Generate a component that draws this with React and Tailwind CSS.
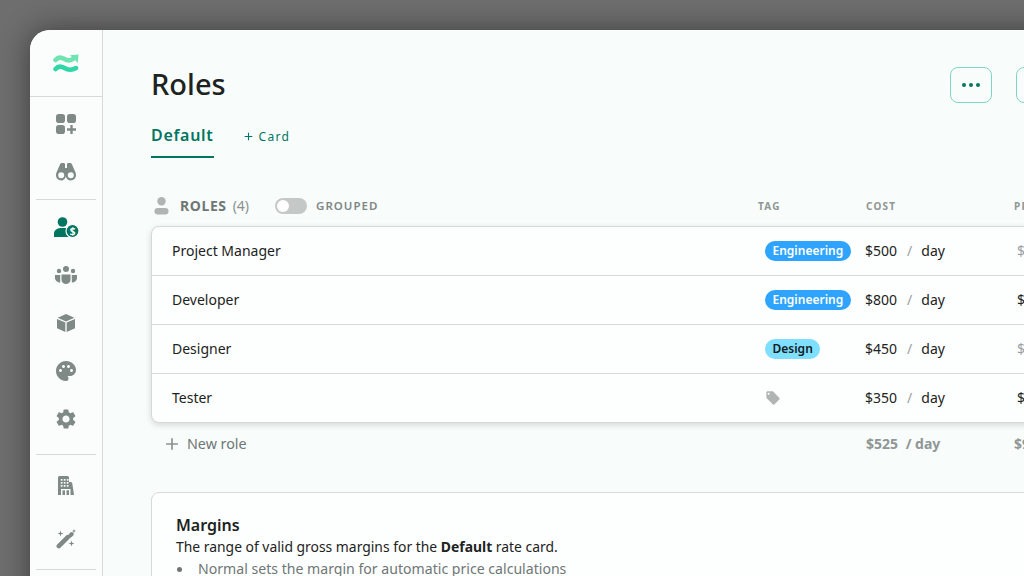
import React from 'react';
import { MdPalette, MdSettings, MdLocalOffer, MdAdd } from 'react-icons/md';

function Logo() {
    return (
        <svg width="26" height="20" viewBox="0 0 26 20" fill="none" className="mt-[1px]">
            <path d="M2.500 6C5 3 8 3 11 4.800S17 7.500 20.500 4.500" stroke="#6fe3b0" strokeWidth="4.500" strokeLinecap="round" />
            <path d="M17 1.200L25.500 .5l-.6 8.500z" fill="#6fe3b0" />
            <path d="M2.500 15C5 12 8 12 11 13.800S18 17 23 14" stroke="#2fd6a8" strokeWidth="4.500" strokeLinecap="round" />
        </svg>
    );
}

function Grid() {
    return (
        <svg width="20" height="20" viewBox="0 0 20 20" fill="#7f8a87">
            <rect x="0" y="0" width="9" height="9" rx="2.800" />
            <rect x="11" y="0" width="9" height="9" rx="2.800" />
            <rect x="0" y="11" width="9" height="9" rx="2.800" />
            <path d="M14.300 11h2.400v3.300H20v2.400h-3.300V20h-2.400v-3.300H11v-2.400h3.300z" />
        </svg>
    );
}

function Binoculars() {
    return (
        <svg width="20" height="18" viewBox="0 0 20 18" fill="#7f8a87">
            <path fillRule="evenodd" d="M4 1.500C4.300.5 5 0 6 0h1.500C8.500 0 9 .6 9 1.500V5h2V1.500C11 .6 11.500 0 12.500 0H14c1 0 1.700.5 2 1.500l3.300 7.500c.5 1 .7 2 .7 3.300 0 3-2.400 5.200-5.200 5.200-2.600 0-4.800-2-5-4.600C9.700 15.500 7.400 17.500 5.200 17.500 2.400 17.500 0 15.300 0 12.300 0 11 .2 10 .7 9zM5.200 9.300a3 3 0 1 0 0 6 3 3 0 0 0 0-6zm9.600 0a3 3 0 1 0 0 6 3 3 0 0 0 0-6z" />
        </svg>
    );
}

function RolesIcon() {
    return (
        <svg width="25" height="20" viewBox="0 0 25 20">
            <circle cx="8.500" cy="5" r="4.800" fill="#00755f" />
            <path d="M0 20v-3.500C0 13 3 11 8.500 11s8.500 2 8.500 5.500V20z" fill="#00755f" />
            <circle cx="18.500" cy="14" r="6.500" fill="#00755f" stroke="#fbfdfc" strokeWidth="1.200" />
            <text x="18.500" y="17.500" textAnchor="middle" fontSize="10" fontWeight="700" fill="#fff" fontFamily="Noto Sans, sans-serif">$</text>
        </svg>
    );
}

function Team() {
    return (
        <svg width="22" height="18" viewBox="0 0 22 18" fill="#7f8a87">
            <circle cx="11" cy="3" r="3" />
            <circle cx="4" cy="5" r="2.200" />
            <circle cx="18" cy="5" r="2.200" />
            <path d="M6.500 8.500h9V14a4.500 4 0 0 1-9 0z" />
            <path d="M0 9h5.200v7.500C2.500 16.500 0 14.500 0 12z" />
            <path d="M22 9h-5.200v7.500c2.700 0 5.200-2 5.200-4.500z" />
        </svg>
    );
}

function Cube() {
    return (
        <svg width="18" height="18" viewBox="0 0 18 18" fill="#7f8a87">
            <path d="M9 0l8.300 3.700L9 7.400.7 3.700z" />
            <path d="M0 5l8.300 3.600V18L0 14.200z" />
            <path d="M18 5L9.700 8.600V18L18 14.200z" />
        </svg>
    );
}

function Building() {
    return (
        <svg width="16" height="19" viewBox="0 0 16 19">
            <path d="M0 1.500Q0 0 1.500 0h8Q11 0 11 1.500V6h2q1 0 1.300 1.500L16 19H0z" fill="#7f8a87" />
            {[3, 6, 9].map((y) => [3, 6, 9].map((x) => (
                <rect key={`${x}-${y}`} x={x - 0.2} y={y} width="1.700" height="1.700" fill="#fbfdfc" />
            )))}
            <rect x="3" y="14" width="1.500" height="5" fill="#fbfdfc" />
            <rect x="7" y="14" width="1.500" height="5" fill="#fbfdfc" />
            <rect x="11" y="14" width="1.500" height="5" fill="#fbfdfc" />
            <rect x="3" y="13" width="9.500" height="1.300" fill="#fbfdfc" />
        </svg>
    );
}

function Wand() {
    return (
        <svg width="20" height="20" viewBox="0 0 20 20" fill="#7f8a87">
            <path d="M2.800 17.200L11.800 8.200" stroke="#7f8a87" strokeWidth="4.500" strokeLinecap="round" fill="none" />
            <path d="M14.200 6.600L15.800 5" stroke="#7f8a87" strokeWidth="4" strokeLinecap="round" fill="none" />
            <path d="M4.500 1.500l.7 2.300 2.300.7-2.300.7-.7 2.300-.7-2.300-2.300-.7 2.300-.7z" />
            <path d="M18 0l.6 1.400 1.400.6-1.400.6-.6 1.400-.6-1.400-1.400-.6 1.400-.6z" />
            <path d="M15.500 11.500l.7 2.300 2.300.7-2.300.7-.7 2.300-.7-2.300-2.300-.7 2.300-.7z" />
        </svg>
    );
}

function Person() {
    return (
        <svg width="15" height="18" viewBox="0 0 15 18" fill="#b0b5b3">
            <circle cx="7.500" cy="4.200" r="4.200" />
            <rect x="0.500" y="11" width="14" height="6.500" rx="3.200" />
        </svg>
    );
}

function SideIcon({ children }) {
    return <div className="h-12 flex items-center justify-center text-[#7f8a87]">{children}</div>;
}

function Tag({ color }) {
    if (color === 'blue') {
        return <span className="inline-flex items-center h-5 px-[7.500px] rounded-full bg-[#2fa4ff] text-white text-xs font-semibold">Engineering</span>;
    }
    return <span className="inline-flex items-center h-5 px-[7.500px] rounded-full bg-[#7fdfff] text-[#10201c] text-xs font-semibold">Design</span>;
}

const roles = [
    { name: 'Project Manager', tag: 'blue', cost: '$500', price: '$', muted: true },
    { name: 'Developer', tag: 'blue', cost: '$800', price: '$', muted: false },
    { name: 'Designer', tag: 'cyan', cost: '$450', price: '$', muted: true },
    { name: 'Tester', cost: '$350', price: '$', muted: false },
];

export default function App() {
    return (
        <div className="w-[1024px] h-[576px] overflow-hidden bg-[#6e6e6e] pt-[30px] pl-[30px]" style={{ fontFamily: '"Noto Sans", sans-serif' }}>
            <div className="flex w-[1200px] h-[700px] rounded-tl-[20px] overflow-hidden bg-[#f8fcfb] shadow-[0_0_30px_rgba(0,0,0,0.45)]">
                <aside className="w-[73px] shrink-0 bg-[#fbfdfc] border-r border-[#d5d9d7] flex flex-col">
                    <div className="h-[67px] border-b border-[#d5d9d7] flex items-center justify-center">
                        <Logo />
                    </div>
                    <div className="pt-[3px] pb-[3px] flex flex-col">
                        <SideIcon><Grid /></SideIcon>
                        <SideIcon><Binoculars /></SideIcon>
                    </div>
                    <div className="mx-[6px] border-t border-[#d5d9d7]" />
                    <div className="pt-[3px] pb-[11px] flex flex-col">
                        <SideIcon><RolesIcon /></SideIcon>
                        <SideIcon><Team /></SideIcon>
                        <SideIcon><Cube /></SideIcon>
                        <SideIcon><MdPalette size={24} /></SideIcon>
                        <SideIcon><MdSettings size={24} /></SideIcon>
                    </div>
                    <div className="mx-[6px] border-t border-[#d5d9d7]" />
                    <div className="pt-[6px] flex flex-col">
                        <div className="h-[48px] flex items-center justify-center"><Building /></div>
                        <div className="h-[60px] flex items-center justify-center"><Wand /></div>
                    </div>
                    <div className="mx-[6px] border-t border-[#d5d9d7]" />
                </aside>
                <main className="w-[965px] ml-[48px] shrink-0">
                    <div className="flex items-center justify-between pt-[37px]">
                        <h1 className="text-[29px] leading-8 pb-[2px] font-medium text-[#1c2321]">Roles</h1>
                        <div className="flex gap-6">
                            <button className="w-[42px] h-9 rounded-lg border border-[#7fd6bf] flex items-center justify-center gap-[3px]">
                                <span className="w-[4px] h-[4px] rounded-full bg-[#00755f]" />
                                <span className="w-[4px] h-[4px] rounded-full bg-[#00755f]" />
                                <span className="w-[4px] h-[4px] rounded-full bg-[#00755f]" />
                            </button>
                            <button className="w-[100px] h-9 rounded-lg border border-[#7fd6bf]" />
                        </div>
                    </div>
                    <div className="flex items-center mt-[18px] h-[37px]">
                        <div className="h-[37px] border-b-2 border-[#00755f] text-base font-semibold tracking-[0.7px] text-[#00755f] leading-[28px]">Default</div>
                        <div className="ml-[28px] pb-[6px] flex items-center gap-1 text-xs tracking-[1.300px] text-[#00755f]">
                            <MdAdd size={13} /><span>Card</span>
                        </div>
                    </div>
                    <div className="flex items-center mt-[38px] h-5">
                        <span className="ml-[3px]"><Person /></span>
                        <span className="ml-[11px] text-sm font-bold text-[#6f7775] tracking-[0.6px]">ROLES</span>
                        <span className="ml-[6px] text-sm text-[#8a918f]">(4)</span>
                        <span className="ml-[26px] w-8 h-4 rounded-full bg-[#c4c8c6] relative">
                            <span className="absolute left-[2px] top-[2px] w-3 h-3 rounded-full bg-white" />
                        </span>
                        <span className="ml-[9px] text-[11.500px] font-semibold text-[#7f8785] tracking-[1px]">GROUPED</span>
                        <span className="ml-auto w-[108px] text-[10px] font-bold text-[#8f9694] tracking-[1.200px]">TAG</span>
                        <span className="w-[148px] text-[10px] font-bold text-[#8f9694] tracking-[1.200px]">COST</span>
                        <span className="w-[102px] text-[10px] font-bold text-[#8f9694] tracking-[1.200px]">PRICE</span>
                    </div>
                    <div className="mt-[10px] rounded-lg border border-[#d5d9d7] bg-[#fdfefe] shadow-[0_2px_6px_rgba(0,0,0,0.15)]">
                        {roles.map((r, i) => (
                            <div key={r.name} className={`flex items-center pl-5 text-sm text-[#1c2321] ${i < 3 ? 'h-[49px] border-b border-[#d5d9d7]' : 'h-[48px]'}`}>
                                <span className="flex-1">{r.name}</span>
                                <span className="w-[100px] flex">
                                    {r.tag ? <Tag color={r.tag} /> : <MdLocalOffer size={16} className="text-[#b0b5b3]" />}
                                </span>
                                <span className="w-[152px] flex">
                                    <span>{r.cost}</span>
                                    <span className="ml-[10px] mr-[9px] text-[#9aa09e]">/</span>
                                    <span>day</span>
                                </span>
                                <span className={`w-[98px] ${r.muted ? 'text-[#9aa09e]' : ''}`}>{r.price}</span>
                            </div>
                        ))}
                    </div>
                    <div className="flex items-center h-[42px] pl-[11px] text-sm text-[#6f7775]">
                        <MdAdd size={20} className="text-[#8a918f]" />
                        <span className="ml-[5px] flex-1 text-[14.300px]">New role</span>
                        <span className="w-[148px] font-bold text-[#8f9694]">$525 <span className="ml-[4px]">/ day</span></span>
                        <span className="w-[102px] font-bold text-[#8f9694]">$9</span>
                    </div>
                    <div className="mt-[27px] rounded-lg border border-[#d5d9d7] bg-[#fdfefe] pt-[21px] pl-6 pb-6">
                        <h2 className="text-base font-semibold leading-[22px] text-[#1c2321]">Margins</h2>
                        <p className="text-[13.900px] leading-[22px] text-[#1c2321]">The range of valid gross margins for the <b>Default</b> rate card.</p>
                        <ul className="text-[14.100px] leading-[22px] text-[#6f7775]">
                            <li className="flex items-center">
                                <span className="w-[5px] h-[5px] rounded-full bg-[#6f7775] ml-[1px] mr-[16px]" />
                                Normal sets the margin for automatic price calculations
                            </li>
                        </ul>
                    </div>
                </main>
            </div>
        </div>
    );
}
